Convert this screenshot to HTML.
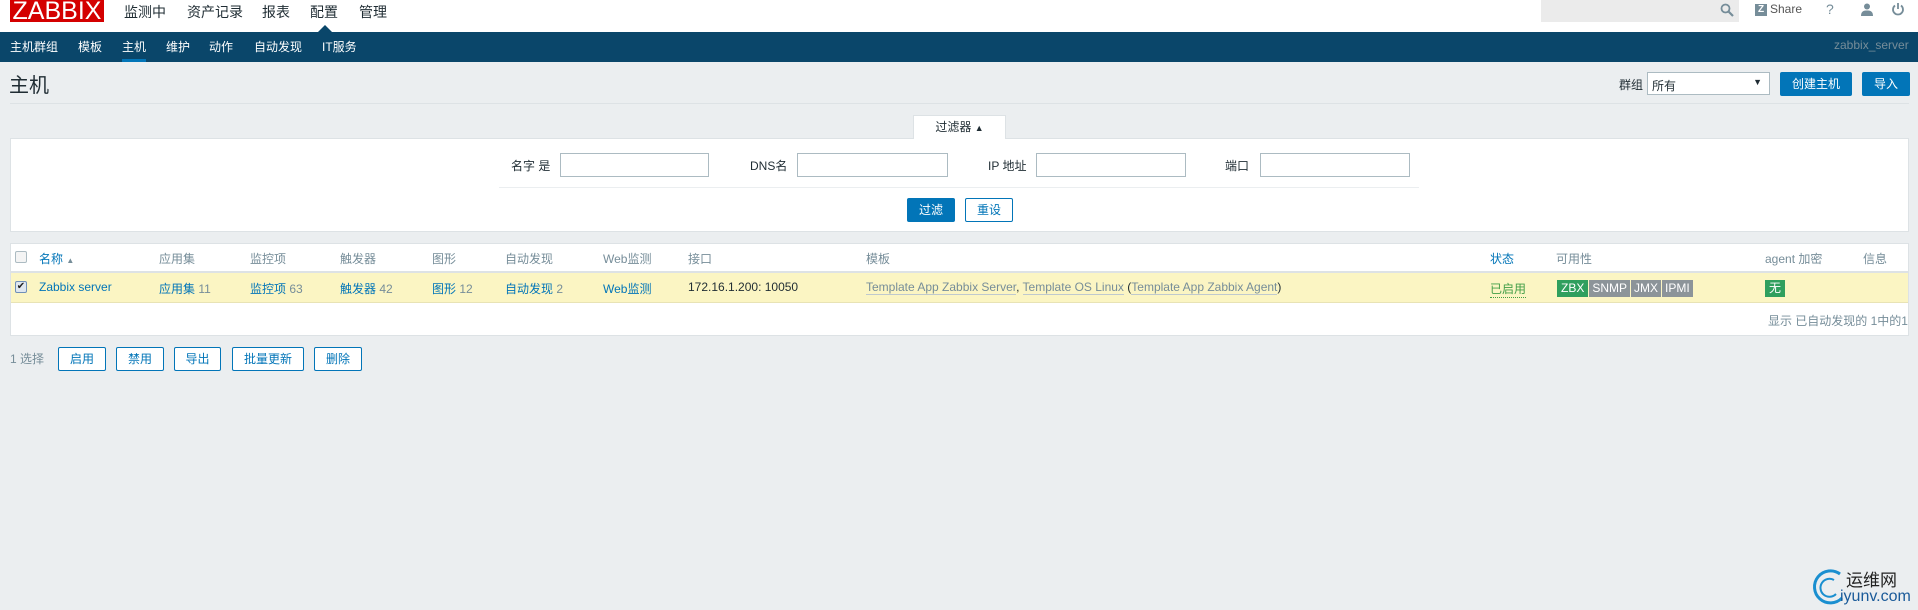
<!DOCTYPE html>
<html><head><meta charset="utf-8"><style>
*{margin:0;padding:0;box-sizing:border-box}
body{width:1918px;height:610px;background:#ebeef0;font-family:"Liberation Sans","Noto Sans CJK SC",sans-serif;font-size:12px;color:#1f2c33;position:relative;overflow:hidden}
.a{position:absolute;white-space:nowrap}
.top{position:absolute;left:0;top:0;width:1918px;height:32px;background:#fff}
.nav{position:absolute;left:0;top:32px;width:1918px;height:30px;background:#0a466a}
.tm{font-size:14px;color:#1f2c33;top:2px}
.sn{color:#fff;top:38px;font-size:12px}
.btn{position:absolute;background:#0275b8;color:#fff;border-radius:2px;text-align:center;font-size:12px}
.obtn{position:absolute;background:#fff;color:#0275b8;border:1px solid #0275b8;border-radius:2px;text-align:center;font-size:12px}
.inp{position:absolute;background:#fff;border:1px solid #acbbc2;height:24px}
.h{color:#768d99;top:250px}
.lk{color:#0275b8}
.gr{color:#768d99}
.tl{color:#768d99;border-bottom:1px solid #bfc9ce}
</style></head><body>
<div class="top"></div>
<div class="a" style="left:10px;top:0;width:94px;height:22px;background:#d40000;color:#fff;font-size:25px;line-height:22px;text-align:center;overflow:hidden">ZABBIX</div>
<div class="a tm" style="left:124px">监测中</div>
<div class="a tm" style="left:187px">资产记录</div>
<div class="a tm" style="left:262px">报表</div>
<div class="a tm" style="left:310px">配置</div>
<div class="a tm" style="left:359px">管理</div>
<div class="a" style="left:1541px;top:0;width:198px;height:22px;background:#ebebeb"></div>
<svg class="a" style="left:1720px;top:3px" width="14" height="14" viewBox="0 0 14 14"><circle cx="5.5" cy="5.5" r="4" fill="none" stroke="#768d99" stroke-width="1.8"/><path d="M8.5 8.5L13 13" stroke="#768d99" stroke-width="2.2"/></svg>
<div class="a" style="left:1755px;top:4px;width:12px;height:12px;background:#768d99;color:#fff;font-size:10px;font-weight:bold;line-height:12px;text-align:center">Z</div>
<div class="a" style="left:1770px;top:2px;color:#555;font-size:12px">Share</div>
<div class="a" style="left:1826px;top:1px;color:#768d99;font-size:14px">?</div>
<svg class="a" style="left:1860px;top:3px" width="14" height="13" viewBox="0 0 14 13"><circle cx="7" cy="3.5" r="3" fill="#768d99"/><path d="M1 13C1 8 4 7.5 7 7.5S13 8 13 13Z" fill="#768d99"/></svg>
<svg class="a" style="left:1891px;top:2px" width="14" height="14" viewBox="0 0 14 14"><path d="M4 3.5A5 5 0 1 0 10 3.5" fill="none" stroke="#768d99" stroke-width="1.8"/><path d="M7 1V7" stroke="#768d99" stroke-width="1.8"/></svg>
<div class="nav"></div>
<svg class="a" style="left:317px;top:25px" width="16" height="8"><path d="M0 8L8 0L16 8Z" fill="#0a466a"/></svg>
<div class="a sn" style="left:10px">主机群组</div>
<div class="a sn" style="left:78px">模板</div>
<div class="a sn" style="left:122px">主机</div>
<div class="a" style="left:122px;top:59px;width:24px;height:3px;background:#0275b8"></div>
<div class="a sn" style="left:166px">维护</div>
<div class="a sn" style="left:209px">动作</div>
<div class="a sn" style="left:254px">自动发现</div>
<div class="a sn" style="left:322px">IT服务</div>
<div class="a" style="left:1834px;top:38px;color:#768d99">zabbix_server</div>
<div class="a" style="left:9px;top:69px;font-size:20px;color:#1f2c33">主机</div>
<div class="a" style="left:10px;top:103px;width:1899px;height:1px;background:#dde2e5"></div>
<div class="a" style="left:1619px;top:76px">群组</div>
<div class="inp" style="left:1647px;top:72px;width:123px;height:23px;padding:4px 4px;font-size:12px">所有<span style="position:absolute;right:7px;top:4px;font-size:9px">▼</span></div>
<div class="btn" style="left:1780px;top:72px;width:72px;height:24px;line-height:24px">创建主机</div>
<div class="btn" style="left:1862px;top:72px;width:48px;height:24px;line-height:24px">导入</div>
<div class="a" style="left:10px;top:138px;width:1899px;height:94px;background:#fff;border:1px solid #dde2e5"></div>
<div class="a" style="left:913px;top:115px;width:93px;height:24px;background:#fff;border:1px solid #dde2e5;border-bottom:none;text-align:center;line-height:22px">过滤器 <span style="font-size:9px">▲</span></div>
<div class="a" style="left:511px;top:157px">名字 是</div>
<div class="inp" style="left:560px;top:153px;width:149px"></div>
<div class="a" style="left:750px;top:157px">DNS名</div>
<div class="inp" style="left:797px;top:153px;width:151px"></div>
<div class="a" style="left:988px;top:157px">IP 地址</div>
<div class="inp" style="left:1036px;top:153px;width:150px"></div>
<div class="a" style="left:1225px;top:157px">端口</div>
<div class="inp" style="left:1260px;top:153px;width:150px"></div>
<div class="a" style="left:499px;top:187px;width:920px;height:1px;background:#ebeef0"></div>
<div class="btn" style="left:907px;top:198px;width:48px;height:24px;line-height:24px">过滤</div>
<div class="obtn" style="left:965px;top:198px;width:48px;height:24px;line-height:22px">重设</div>
<div class="a" style="left:10px;top:243px;width:1899px;height:93px;background:#fff;border:1px solid #dde2e5"></div>
<div class="a" style="left:11px;top:271px;width:1897px;height:2px;background:#dde2e5"></div>
<div class="a" style="left:11px;top:273px;width:1897px;height:30px;background:#fbf5c3;border-bottom:1px solid #e8e3b5"></div>
<div class="a" style="left:15px;top:251px;width:12px;height:12px;border:1px solid #acbbc2;border-radius:2px;background:#f4f4f4"></div>
<div class="a h lk" style="left:39px">名称 <span style="font-size:8px;color:#768d99">▲</span></div>
<div class="a h" style="left:159px">应用集</div>
<div class="a h" style="left:250px">监控项</div>
<div class="a h" style="left:340px">触发器</div>
<div class="a h" style="left:432px">图形</div>
<div class="a h" style="left:505px">自动发现</div>
<div class="a h" style="left:603px">Web监测</div>
<div class="a h" style="left:688px">接口</div>
<div class="a h" style="left:866px">模板</div>
<div class="a h lk" style="left:1490px">状态</div>
<div class="a h" style="left:1556px">可用性</div>
<div class="a h" style="left:1765px">agent 加密</div>
<div class="a h" style="left:1863px">信息</div>
<div class="a" style="left:15px;top:281px;width:12px;height:12px;border:1px solid #6f8fb8;border-radius:2px;background:#dfe7ef;font-size:10px;line-height:10px;text-align:center;color:#222">✔</div>
<div class="a lk" style="left:39px;top:280px">Zabbix server</div>
<div class="a" style="left:159px;top:280px"><span class="lk">应用集</span> <span class="gr">11</span></div>
<div class="a" style="left:250px;top:280px"><span class="lk">监控项</span> <span class="gr">63</span></div>
<div class="a" style="left:340px;top:280px"><span class="lk">触发器</span> <span class="gr">42</span></div>
<div class="a" style="left:432px;top:280px"><span class="lk">图形</span> <span class="gr">12</span></div>
<div class="a" style="left:505px;top:280px"><span class="lk">自动发现</span> <span class="gr">2</span></div>
<div class="a lk" style="left:603px;top:280px">Web监测</div>
<div class="a" style="left:688px;top:280px">172.16.1.200: 10050</div>
<div class="a" style="left:866px;top:280px"><span class="tl">Template App Zabbix Server</span>, <span class="tl">Template OS Linux</span> (<span class="tl">Template App Zabbix Agent</span>)</div>
<div class="a" style="left:1490px;top:280px;color:#429e47;border-bottom:1px dotted #429e47">已启用</div>
<div class="a" style="left:1557px;top:280px;height:17px;font-size:12px;line-height:17px;color:#fff"><span style="background:#2f9f5e;padding:0 4px;display:inline-block">ZBX</span><span style="background:#8c9499;padding:0 3px;display:inline-block;margin-left:1px">SNMP</span><span style="background:#8c9499;padding:0 3px;display:inline-block;margin-left:1px">JMX</span><span style="background:#8c9499;padding:0 3px;display:inline-block;margin-left:1px">IPMI</span></div>
<div class="a" style="left:1765px;top:280px;width:20px;height:17px;background:#2f9f5e;color:#fff;text-align:center;line-height:17px">无</div>
<div class="a gr" style="right:10px;top:312px">显示 已自动发现的 1中的1</div>
<div class="a gr" style="left:10px;top:350px">1 选择</div>
<div class="obtn" style="left:58px;top:347px;width:48px;height:24px;line-height:22px">启用</div>
<div class="obtn" style="left:116px;top:347px;width:48px;height:24px;line-height:22px">禁用</div>
<div class="obtn" style="left:174px;top:347px;width:47px;height:24px;line-height:22px">导出</div>
<div class="obtn" style="left:232px;top:347px;width:72px;height:24px;line-height:22px">批量更新</div>
<div class="obtn" style="left:314px;top:347px;width:48px;height:24px;line-height:22px">删除</div>
<svg class="a" style="left:1812px;top:566px" width="36" height="40"><path d="M28 8A16 16 0 1 0 30 32" fill="none" stroke="#1a8fd0" stroke-width="3"/><path d="M22 14A9 9 0 1 0 24 28" fill="none" stroke="#1a8fd0" stroke-width="2"/></svg>
<div class="a" style="left:1846px;top:566px;font-size:17px;color:#222">运维网</div>
<div class="a" style="left:1840px;top:588px;font-size:16px;color:#1a5a99">iyunv.com</div>
</body></html>
